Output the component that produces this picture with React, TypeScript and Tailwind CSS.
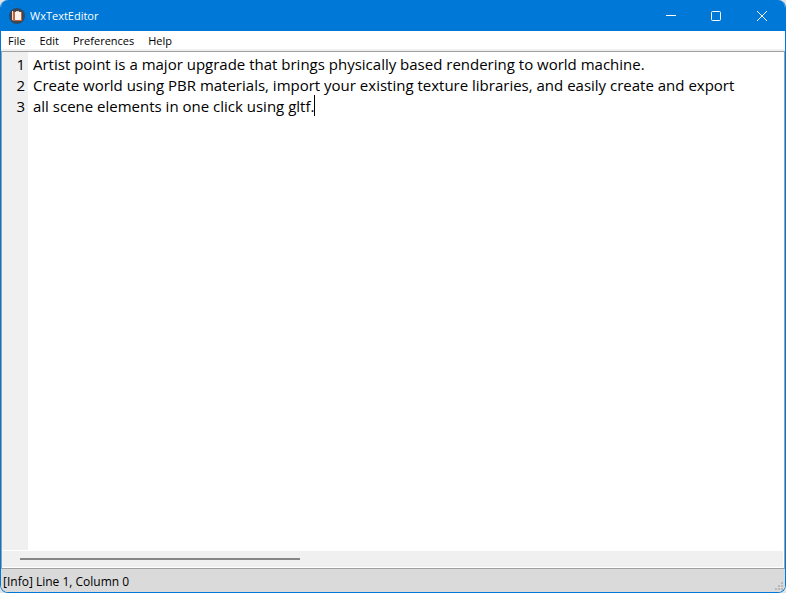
import { useLayoutEffect, useRef, useState } from 'react';

const menus = ['File', 'Edit', 'Preferences', 'Help'];

const initialText = [
  'Artist point is a major upgrade that brings physically based rendering to world machine.',
  'Create world using PBR materials, import your existing texture libraries, and easily create and export',
  'all scene elements in one click using gltf.',
].join('\n');

const LINE_HEIGHT = 21;

function AppIcon() {
  return (
    <svg width="16" height="16" viewBox="0 0 16 16" aria-hidden="true">
      <circle cx="8" cy="8" r="8" fill="#34495e" />
      <path d="M3 3.5h8v9H3z" fill="#b9573a" />
      <path d="M3 3h1v9H3z" fill="#f0dcc8" />
      <path d="M4 4h9v9H4z" fill="#c8643c" />
      <path d="M6 4h6v8H6z" fill="#fdf4f0" />
      <path d="M7 3h3v1H7z" fill="#e9cfae" />
    </svg>
  );
}

function ResizeGrip() {
  return (
    <svg width="8" height="8" viewBox="0 0 8 8" fill="#b8b8b8" aria-hidden="true">
      <path d="M6 0h2v2H6zM3 3h2v2H3zM6 3h2v2H6zM0 6h2v2H0zM3 6h2v2H3zM6 6h2v2H6z" />
    </svg>
  );
}

function TitleBar() {
  const control = 'flex h-full w-[46px] items-center justify-center hover:bg-white/10';
  return (
    <header className="flex h-[31px] shrink-0 items-center bg-[#0078d7] pr-[1px] pl-[9px] text-white">
      <AppIcon />
      <h1 className="ml-[5px] flex-1 text-[11px] leading-4">WxTextEditor</h1>
      <button type="button" aria-label="Minimize" className={control}>
        <svg width="12" height="12" viewBox="0 0 12 12" fill="none" stroke="currentColor">
          <path d="M2 5.5h10" />
        </svg>
      </button>
      <button type="button" aria-label="Maximize" className={control}>
        <svg width="12" height="12" viewBox="0 0 12 12" fill="none" stroke="currentColor">
          <rect x="1.5" y="1.5" width="9" height="9" rx="1" />
        </svg>
      </button>
      <button type="button" aria-label="Close" className={control}>
        <svg width="12" height="12" viewBox="0 0 12 12" fill="none" stroke="currentColor">
          <path d="M1 1l10 10M11 1L1 11" />
        </svg>
      </button>
    </header>
  );
}

function Editor() {
  const [text, setText] = useState(initialText);
  const [position, setPosition] = useState(initialText.length);
  const [caretLeft, setCaretLeft] = useState(0);
  const area = useRef<HTMLTextAreaElement>(null);
  const before = text.slice(0, position).split('\n');

  useLayoutEffect(() => {
    const context = document.createElement('canvas').getContext('2d');
    if (!area.current || !context) return;
    const style = getComputedStyle(area.current);
    context.font = `${style.fontSize} ${style.fontFamily}`;
    setCaretLeft(Math.floor(context.measureText(before[before.length - 1]).width));
  }, [text, position]);

  return (
    <div className="flex min-h-0 flex-1">
      <ol className="w-[26px] shrink-0 bg-[#f0f0f0] pt-[2px] pr-[3px] text-right text-[15px] leading-[21px]">
        {text.split('\n').map((_, i) => (
          <li key={i}>{i + 1}</li>
        ))}
      </ol>
      <div className="relative ml-[5px] flex min-w-0 flex-1">
        <textarea
          ref={area}
          aria-label="Document"
          wrap="off"
          spellCheck={false}
          value={text}
          onChange={(e) => {
            setText(e.target.value);
            setPosition(e.target.selectionStart);
          }}
          onSelect={(e) => setPosition(e.currentTarget.selectionStart)}
          className="min-w-0 flex-1 resize-none overflow-hidden bg-white pt-[2px] text-[15px] leading-[21px] caret-transparent outline-none"
        />
        <span
          aria-hidden="true"
          className="pointer-events-none absolute w-px bg-black"
          style={{ left: caretLeft, top: 1 + (before.length - 1) * LINE_HEIGHT, height: LINE_HEIGHT }}
        />
      </div>
    </div>
  );
}

export default function App() {
  return (
    <div className="h-screen bg-[#e4e4e4] font-['Open_Sans',sans-serif] text-black">
      <div className="flex h-full flex-col overflow-hidden rounded-lg border border-t-0 border-[#0078d7] bg-white">
        <div className="-mx-px shrink-0">
          <TitleBar />
        </div>
        <nav className="flex h-[20px] shrink-0 items-center gap-[14px] border-b-2 border-[#f0f0f0] px-[7px] text-[11px] leading-4">
          {menus.map((name) => (
            <button key={name} type="button" className="pt-[2px]">
              {name}
            </button>
          ))}
        </nav>
        <main className="flex min-h-0 flex-1 flex-col border border-[#a0a0a0]">
          <Editor />
          <div className="mt-px mr-px mb-px flex h-4 shrink-0 items-center bg-[#f0f0f0] pl-[18px]">
            <div className="h-[2px] w-[280px] bg-[#868686]" />
          </div>
        </main>
        <footer className="flex h-[23px] shrink-0 items-center justify-between bg-[#dadada] pr-[2px] pl-[2px] text-[12px] leading-4">
          <p className="pt-[2px]">[Info] Line 1, Column 0</p>
          <div className="self-end pb-[2px]">
            <ResizeGrip />
          </div>
        </footer>
      </div>
    </div>
  );
}
